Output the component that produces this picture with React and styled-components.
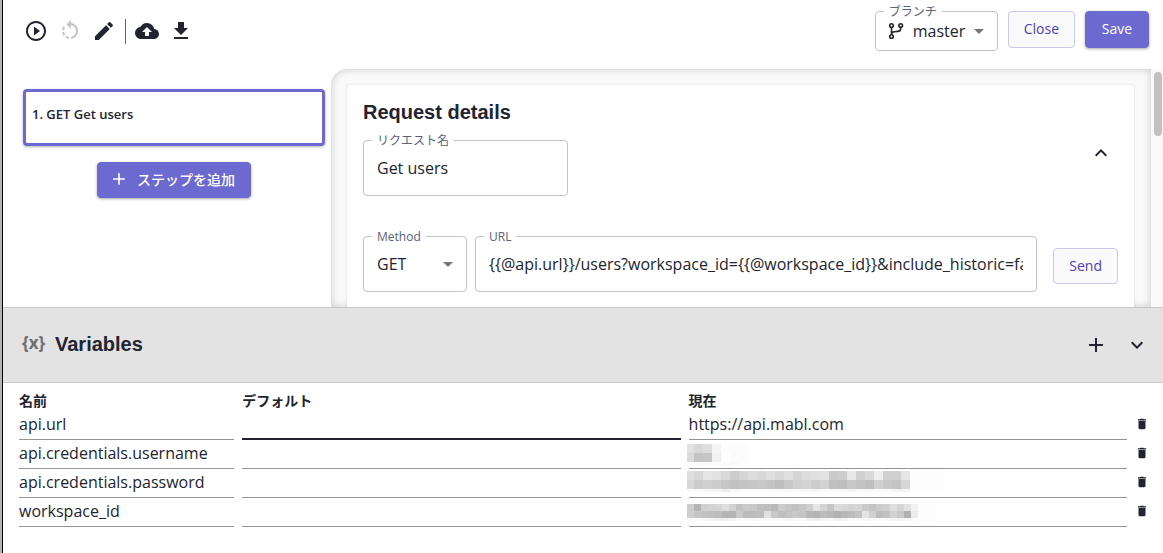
import React from "react";
import styled, { createGlobalStyle, css } from "styled-components";
import {
  MdPlayCircleOutline,
  MdRotateLeft,
  MdEdit,
  MdBackup,
  MdGetApp,
  MdAdd,
  MdExpandLess,
  MdExpandMore,
  MdArrowDropDown,
  MdDelete,
} from "react-icons/md";

const ink = "#22242f";
const violet = "#6c69d0";
const violetText = "#4f3db3";
const bodyFont = '"Open Sans", "Noto Sans CJK JP", sans-serif';
const headFont = '"Liberation Sans", Arial, sans-serif';

const Global = createGlobalStyle`
  *, *::before, *::after { box-sizing: border-box; }
  body { margin: 0; background: #fff; color: ${ink}; font: 16px ${bodyFont}; }
  button, input, select { font: inherit; color: inherit; }
`;

const Page = styled.div`
  display: flex;
  flex-direction: column;
  height: 100vh;
  border-left: 2px solid #b4b4b4;
  overflow: hidden;
`;

const Frame = styled.div`
  display: flex;
  flex-direction: column;
  flex: 1;
  min-height: 0;
  border-left: 1px solid #000;
`;

const Toolbar = styled.header`
  display: flex;
  align-items: flex-start;
  justify-content: space-between;
  padding: 11px 14px 18px 16px;
`;

const Tools = styled.div`
  display: flex;
  align-items: center;
  height: 40px;
`;

const Actions = styled.div`
  display: flex;
  align-items: flex-start;
  gap: 10px;
`;

const IconButton = styled.button`
  display: flex;
  align-items: center;
  justify-content: center;
  width: ${(p) => p.$size || 34}px;
  height: ${(p) => p.$size || 34}px;
  padding: 0;
  border: 0;
  background: none;
  color: ${ink};
  cursor: pointer;
  &:disabled { color: #c4c4c4; }
`;

const Divider = styled.span`
  width: 1px;
  height: 25px;
  margin: 0 4px;
  background: #5f6880;
`;

const Button = styled.button`
  display: inline-flex;
  align-items: center;
  justify-content: center;
  gap: 8px;
  min-width: 64px;
  height: ${(p) => p.$height || 36}px;
  padding: 0 15px 2px;
  border: 1px solid #cbc8ef;
  border-radius: 4px;
  background: #fafafa;
  color: ${violetText};
  font-size: 14px;
  white-space: nowrap;
  cursor: pointer;
  ${(p) =>
    p.$primary &&
    css`
      border-color: ${violet};
      background: ${violet};
      color: #fff;
      box-shadow: 0 1px 3px rgba(0, 0, 0, 0.35);
    `}
  ${(p) =>
    p.$icon &&
    css`
      padding-left: 11px;
      font-weight: 500;
    `}
`;

const Field = styled.div`
  position: relative;
  display: flex;
  align-items: center;
  flex: ${(p) => (p.$grow ? "1" : "none")};
  min-width: 0;
  width: ${(p) => (p.$width ? p.$width + "px" : "auto")};
  height: ${(p) => p.$height || 56}px;
  border: 1px solid #c4c4c4;
  border-radius: 4px;
`;

const FieldLabel = styled.label`
  position: absolute;
  top: -8px;
  left: 8px;
  padding: 0 5px;
  background: #fff;
  color: #59617a;
  font-size: 12px;
  line-height: 16px;
  white-space: nowrap;
`;

const control = css`
  width: 100%;
  height: 100%;
  border: 0;
  outline: 0;
  background: none;
  border-radius: 4px;
`;

const TextInput = styled.input`
  ${control}
  margin: 0 13px;
  padding: 0;
`;

const Select = styled.select`
  ${control}
  appearance: none;
  padding: 0 28px 0 ${(p) => p.$inset || 13}px;
`;

const Adornment = styled.span`
  position: absolute;
  display: flex;
  pointer-events: none;
  ${(p) => (p.$start ? "left: 12px;" : "right: 6px;")}
  color: ${(p) => (p.$start ? ink : "#757575")};
`;

const Workspace = styled.div`
  display: flex;
  flex: 1;
  min-height: 0;
`;

const Steps = styled.nav`
  display: flex;
  flex-direction: column;
  align-items: center;
  gap: 16px;
  flex: 0 0 328px;
  padding: 20px 6px 0 20px;
`;

const Step = styled.div`
  width: 100%;
  height: 57px;
  padding: 12px 6px;
  border: 3px solid ${violet};
  border-radius: 4px;
  box-shadow: 0 1px 3px rgba(0, 0, 0, 0.3);
  font-size: 13px;
  font-weight: 600;
  line-height: 20px;
`;

const Detail = styled.main`
  flex: 1;
  min-width: 0;
  padding: 16px 17px 0 16px;
  overflow: hidden;
  border-top-left-radius: 16px;
  background: #fafafa;
  box-shadow: inset 0 0 8px rgba(0, 0, 0, 0.2);
`;

const Card = styled.section`
  height: 400px;
  padding: 16px;
  border-radius: 4px;
  background: #fff;
  box-shadow: 0 0 3px rgba(0, 0, 0, 0.12);
`;

const CardTop = styled.div`
  display: flex;
  align-items: center;
  justify-content: space-between;
  margin-bottom: 40px;
`;

const CollapseSlot = styled.div`
  padding-top: 8px;
`;

const Heading = styled.h2`
  margin: 0;
  font: bold 20px/23px ${headFont};
`;

const NameBlock = styled.div`
  display: flex;
  flex-direction: column;
  gap: 16px;
`;

const RequestRow = styled.div`
  display: flex;
  align-items: flex-end;
  gap: 8px;
`;

const SendSlot = styled.div`
  display: flex;
  padding: 0 0 8px 8px;
`;

const ScrollTrack = styled.div`
  flex: 0 0 12px;
  padding: 3px 1px 0 3px;
  background: #fafafa;
`;

const ScrollThumb = styled.div`
  height: 64px;
  border-radius: 4px;
  background: #c1c1c1;
`;

const Variables = styled.section`
  flex: none;
  padding-bottom: 26px;
  border-top: 1px solid #c8c8c8;
`;

const VariablesBar = styled.div`
  display: flex;
  align-items: center;
  height: 75px;
  padding: 0 9px 0 19px;
  border-bottom: 1px solid #c8c8c8;
  background: #e3e3e3;
`;

const BarTitle = styled.div`
  display: flex;
  align-items: center;
  padding-bottom: 2px;
`;

const Braces = styled.span`
  width: 33px;
  padding-bottom: 2px;
  color: #6e6e6e;
  font-size: 17px;
  font-weight: 700;
  line-height: 24px;
`;

const BarActions = styled.div`
  display: flex;
  gap: 7px;
  margin-left: auto;
`;

const Table = styled.table`
  display: block;
  padding: 0 14px 0 16px;
  thead, tbody { display: block; }
  tr { display: grid; grid-template-columns: 1fr 2fr 2fr 14px; }
`;

const HeadCell = styled.th`
  padding: 8px 8px 0 0;
  font-size: 14px;
  font-weight: 600;
  line-height: 20px;
  text-align: left;
`;

const Cell = styled.td`
  display: flex;
  align-items: center;
  min-width: 0;
  height: 29px;
  padding: ${(p) => (p.$last ? "0 0 4px" : "0 8px 0 0")};
`;

const cellLine = css`
  width: 100%;
  height: 29px;
  border: 0;
  border-bottom: ${(p) => (p.$active ? `2px solid ${ink}` : "1px solid #949494")};
`;

const CellInput = styled.input`
  ${cellLine}
  padding: 0 0 2px;
  border-radius: 0;
  outline: 0;
  background: none;
`;

const Masked = styled.div`
  ${cellLine}
  display: flex;
  align-items: center;
`;

const MosaicArt = styled.svg`
  display: block;
  flex: none;
  margin-left: -2px;
`;

/* Grey levels of the pixelated secrets, two hex digits per block. */
const masks = {
  username: {
    cell: 9,
    first: 7,
    height: 21,
    trail: 61,
    rows: ["e2d8def4fcfcfc", "dac4c6f0fffcfc", "fcfafafafafafd"],
  },
  password: {
    cell: 9,
    first: 7,
    height: 24,
    trail: 258,
    rows: [
      "dfd8e6e2d9ccd4ddd8e0d8e0d5dde0e2cacce8d0d8eed0d0e6",
      "d8ccd0ccc6c2c4c6c8c4bec8d0d4ccd2c0bec8c2bed0c8c4d6",
      "fafaf6f4eef8fafafafafafafaf8f6fafaf8f4f8f8fafaf4f4",
    ],
  },
  workspace: {
    cell: 7,
    first: 7,
    height: 17,
    trail: 250,
    rows: [
      "ccb4d0d4d6ded2c4cac8c0beb8ccc6c2c6cee6d4c6dcd8d4d6cac4ccd0ded4e2f2",
      "cec6c2c0bcb4b4cabcbcbee0c8c0c4c8c4b8b4bcb8b2b8bcc4e4d0bcc2d0c8b0ec",
      "fafaf8f4f0eef4fafaf8f8fafafaf6f8faf2eef4f8f0f4fafaf8f8fafaf4f4f6fc",
    ],
  },
};

function Mosaic({ name }) {
  const { cell, first, height, trail, rows } = masks[name];
  return (
    <MosaicArt width={trail} height={height} shapeRendering="crispEdges" role="img" aria-label={name}>
      <rect width={trail} height={cell * 2 + 3} fill="#fdfdfd" />
      {rows.map((row, y) =>
        row.match(/../g).map((level, x) => (
          <rect
            key={`${x}-${y}`}
            x={x ? first + (x - 1) * cell : 0}
            y={y * cell}
            width={x ? cell : first}
            height={y === 2 ? 3 : cell}
            fill={`#${level}${level}${level}`}
          />
        ))
      )}
    </MosaicArt>
  );
}

function BranchIcon() {
  return (
    <svg width="16" height="18" viewBox="0 0 16 18" fill="none" stroke="currentColor" strokeWidth="1.6">
      <circle cx="3.5" cy="3.5" r="1.8" />
      <circle cx="3.5" cy="14.5" r="1.8" />
      <circle cx="12.7" cy="3.5" r="1.8" />
      <path d="M3.5 5.3v7.4M12.7 5.3v1.2c0 2.2-1.2 2.8-3 2.9l-3.2.3c-1.800.2-3 .9-3 2.6" />
    </svg>
  );
}

function Variable({ name, value, mask, active }) {
  return (
    <tr>
      <Cell><CellInput aria-label="名前" defaultValue={name} /></Cell>
      <Cell><CellInput aria-label="デフォルト" $active={active} /></Cell>
      <Cell>
        {mask ? (
          <Masked><Mosaic name={mask} /></Masked>
        ) : (
          <CellInput aria-label="現在" defaultValue={value} />
        )}
      </Cell>
      <Cell $last>
        <IconButton $size={14} aria-label="削除"><MdDelete size={14} /></IconButton>
      </Cell>
    </tr>
  );
}

export default function App() {
  return (
    <Page>
      <Global />
      <Frame>
        <Toolbar>
          <Tools>
            <IconButton aria-label="Run"><MdPlayCircleOutline size={24} /></IconButton>
            <IconButton aria-label="Reset" disabled><MdRotateLeft size={24} /></IconButton>
            <IconButton aria-label="Edit"><MdEdit size={24} /></IconButton>
            <Divider />
            <IconButton aria-label="Upload"><MdBackup size={24} /></IconButton>
            <IconButton aria-label="Download"><MdGetApp size={24} /></IconButton>
          </Tools>
          <Actions>
            <Field $width={123} $height={40}>
              <FieldLabel htmlFor="branch">ブランチ</FieldLabel>
              <Adornment $start><BranchIcon /></Adornment>
              <Select id="branch" $inset={37}><option>master</option></Select>
              <Adornment><MdArrowDropDown size={24} /></Adornment>
            </Field>
            <Button $height={37}>Close</Button>
            <Button $height={37} $primary>Save</Button>
          </Actions>
        </Toolbar>
        <Workspace>
          <Steps>
            <Step>1. GET Get users</Step>
            <Button $primary $icon><MdAdd size={20} />ステップを追加</Button>
          </Steps>
          <Detail>
            <Card>
              <CardTop>
                <NameBlock>
                  <Heading>Request details</Heading>
                  <Field $width={205}>
                    <FieldLabel htmlFor="request-name">リクエスト名</FieldLabel>
                    <TextInput id="request-name" defaultValue="Get users" />
                  </Field>
                </NameBlock>
                <CollapseSlot>
                  <IconButton aria-label="Collapse"><MdExpandLess size={24} /></IconButton>
                </CollapseSlot>
              </CardTop>
              <RequestRow>
                <Field $width={104}>
                  <FieldLabel htmlFor="method">Method</FieldLabel>
                  <Select id="method"><option>GET</option></Select>
                  <Adornment><MdArrowDropDown size={24} /></Adornment>
                </Field>
                <Field $grow>
                  <FieldLabel htmlFor="url">URL</FieldLabel>
                  <TextInput
                    id="url"
                    defaultValue="{{@api.url}}/users?workspace_id={{@workspace_id}}&include_historic=false"
                  />
                </Field>
                <SendSlot><Button>Send</Button></SendSlot>
              </RequestRow>
            </Card>
          </Detail>
          <ScrollTrack><ScrollThumb /></ScrollTrack>
        </Workspace>
        <Variables>
          <VariablesBar>
            <BarTitle>
              <Braces aria-hidden="true">{"{x}"}</Braces>
              <Heading>Variables</Heading>
            </BarTitle>
            <BarActions>
              <IconButton aria-label="Add"><MdAdd size={24} /></IconButton>
              <IconButton aria-label="Collapse variables"><MdExpandMore size={24} /></IconButton>
            </BarActions>
          </VariablesBar>
          <Table>
            <thead>
              <tr>
                <HeadCell>名前</HeadCell>
                <HeadCell>デフォルト</HeadCell>
                <HeadCell>現在</HeadCell>
              </tr>
            </thead>
            <tbody>
              <Variable name="api.url" value="https://api.mabl.com" active />
              <Variable name="api.credentials.username" mask="username" />
              <Variable name="api.credentials.password" mask="password" />
              <Variable name="workspace_id" mask="workspace" />
            </tbody>
          </Table>
        </Variables>
      </Frame>
    </Page>
  );
}
